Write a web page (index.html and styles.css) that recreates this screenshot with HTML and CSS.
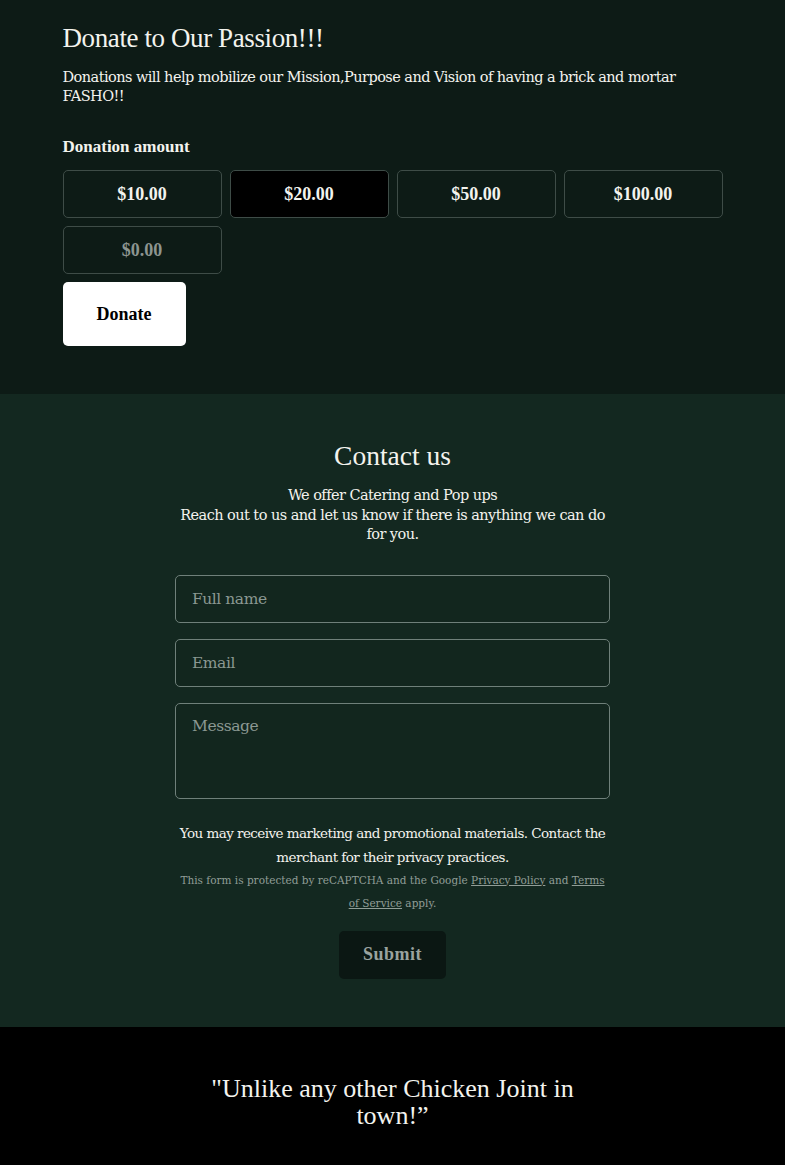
FILE: index.html
```html
<!DOCTYPE html>
<html lang="en">
<head>
<meta charset="utf-8">
<title>Donate</title>
<link rel="stylesheet" href="styles.css">
</head>
<body>
<section class="donate">
  <div class="wrap">
    <h2 class="donate-title">Donate to Our Passion!!!</h2>
    <p class="donate-text">Donations will help mobilize our Mission,Purpose and Vision of having a brick and mortar FASHO!!</p>
    <div class="amount-label">Donation amount</div>
    <div class="amounts">
      <button class="amt">$10.00</button>
      <button class="amt amt-selected">$20.00</button>
      <button class="amt">$50.00</button>
      <button class="amt">$100.00</button>
      <button class="amt amt-custom">$0.00</button>
    </div>
    <button class="donate-btn">Donate</button>
  </div>
</section>
<section class="contact">
  <div class="contact-wrap">
    <h2 class="contact-title">Contact us</h2>
    <p class="contact-text">We offer Catering and Pop ups<br>Reach out to us and let us know if there is anything we can do for you.</p>
    <form class="form">
      <input class="field" type="text" placeholder="Full name">
      <input class="field" type="email" placeholder="Email">
      <textarea class="field field-msg" placeholder="Message"></textarea>
      <p class="marketing">You may receive marketing and promotional materials. Contact the merchant for their privacy practices.</p>
      <p class="captcha">This form is protected by reCAPTCHA and the Google <a href="#">Privacy Policy</a> and <a href="#">Terms of Service</a> apply.</p>
      <button class="submit" type="button">Submit</button>
    </form>
  </div>
</section>
<section class="quote">
  <p class="quote-text">"Unlike any other Chicken Joint in town!”</p>
</section>
</body>
</html>
```
FILE: styles.css
```css
* { box-sizing: border-box; }
html, body { margin: 0; padding: 0; }
body {
  background: #000;
  color: #f3f3ee;
  font-family: "DejaVu Serif", serif;
}
.donate {
  background: #0d1b16;
  padding: 21px 0 48px;
}
.wrap {
  width: 660px;
  margin: 0 auto;
}
.donate-title {
  font-family: "Liberation Serif", serif;
  font-weight: 400;
  font-size: 27px;
  line-height: 34px;
  margin: 0 0 13px;
  letter-spacing: -0.4px;
}
.donate-text {
  font-size: 14.5px;
  line-height: 19px;
  margin: 0 0 30px;
  letter-spacing: -0.55px;
}
.amount-label {
  font-family: "Liberation Serif", serif;
  font-weight: 700;
  font-size: 17px;
  line-height: 22px;
  margin-bottom: 12px;
}
.amounts {
  display: grid;
  grid-template-columns: repeat(4, 1fr);
  gap: 8px;
}
.amt {
  height: 48px;
  background: transparent;
  border: 1px solid #3e4c47;
  border-radius: 5px;
  color: #f3f3ee;
  font-family: "Liberation Serif", serif;
  font-weight: 700;
  font-size: 18px;
}
.amt-selected { background: #000; }
.amt-custom { color: #8c9590; }
.donate-btn {
  margin-top: 8px;
  width: 123px;
  height: 64px;
  background: #fff;
  border: 0;
  border-radius: 5px;
  color: #000;
  font-family: "Liberation Serif", serif;
  font-weight: 700;
  font-size: 18px;
}
.contact {
  background: #132820;
  padding: 45px 0 48px;
}
.contact-wrap {
  width: 435px;
  margin: 0 auto;
  text-align: center;
}
.contact-title {
  font-family: "Liberation Serif", serif;
  font-weight: 400;
  font-size: 27.5px;
  line-height: 34px;
  margin: 0 0 13px;
}
.contact-text {
  font-size: 14.5px;
  line-height: 19.5px;
  margin: 0 0 30px;
  letter-spacing: -0.55px;
}
.form {
  display: flex;
  flex-direction: column;
  align-items: center;
}
.field {
  width: 100%;
  height: 48px;
  margin: 0 0 16px;
  background: #12261e;
  border: 1px solid #6f807a;
  border-radius: 5px;
  padding: 0 16px;
  color: #f3f3ee;
  font-family: "DejaVu Serif", serif;
  font-size: 15.5px;
  letter-spacing: -0.45px;
}
.field::placeholder { color: #8b9892; }
.field-msg {
  height: 96px;
  padding-top: 13px;
  resize: none;
  margin-bottom: 22px;
}
.marketing {
  font-size: 13.5px;
  line-height: 24px;
  margin: 0;
  letter-spacing: -0.55px;
}
.captcha {
  font-size: 10.5px;
  line-height: 23px;
  margin: 0 0 16px;
  color: #909d97;
}
.captcha a { color: #909d97; }
.submit {
  width: 107px;
  height: 48px;
  background: #0b1713;
  border: 0;
  border-radius: 5px;
  color: #9aa39f;
  font-family: "Liberation Serif", serif;
  font-weight: 700;
  font-size: 18px;
  letter-spacing: 0.5px;
}
.quote {
  background: #000;
  padding: 48px 0 40px;
  text-align: center;
}
.quote-text {
  width: 420px;
  margin: 0 auto;
  font-family: "Liberation Serif", serif;
  font-size: 26px;
  line-height: 27px;
}
```
